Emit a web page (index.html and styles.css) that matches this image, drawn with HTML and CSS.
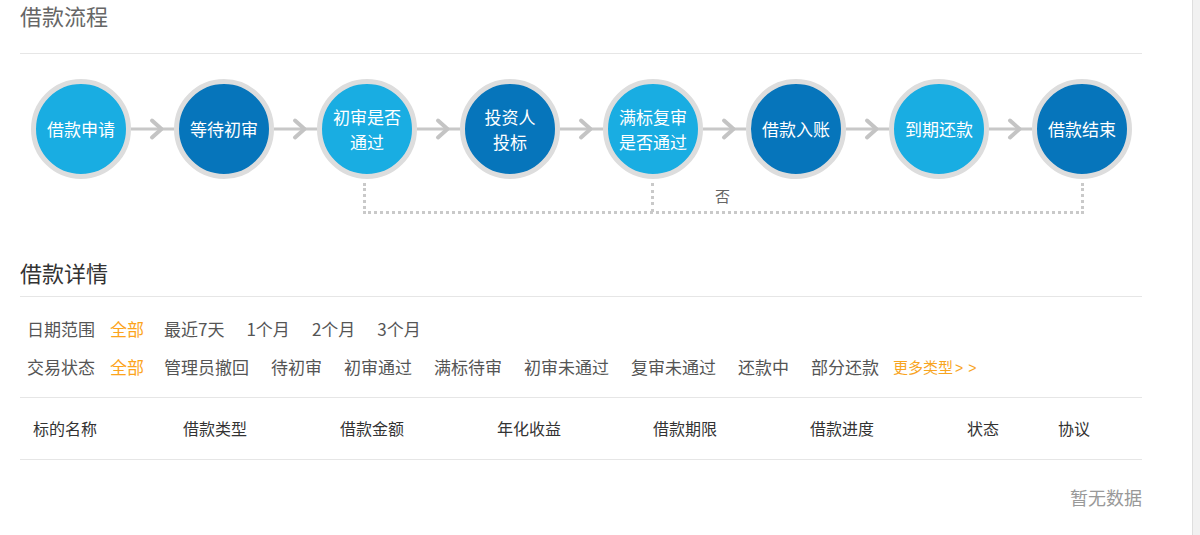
FILE: index.html
```html
<!DOCTYPE html>
<html lang="zh-CN">
<head>
<meta charset="utf-8">
<title>借款流程</title>
<link rel="stylesheet" href="styles.css">
</head>
<body>
<div class="page">
  <main class="main">
    <h2 class="title title-flow">借款流程</h2>

    <div class="flow">
      <div class="steps">
        <div class="step light"><span>借款申请</span></div>
        <div class="conn"><svg viewBox="0 0 43 24" width="43" height="24"><line x1="0" y1="12" x2="43" y2="12"/><path d="M21 3.5 L30.5 12 L21 20.5"/></svg></div>
        <div class="step dark"><span>等待初审</span></div>
        <div class="conn"><svg viewBox="0 0 43 24" width="43" height="24"><line x1="0" y1="12" x2="43" y2="12"/><path d="M21 3.5 L30.5 12 L21 20.5"/></svg></div>
        <div class="step light"><span>初审是否<br>通过</span></div>
        <div class="conn"><svg viewBox="0 0 43 24" width="43" height="24"><line x1="0" y1="12" x2="43" y2="12"/><path d="M21 3.5 L30.5 12 L21 20.5"/></svg></div>
        <div class="step dark"><span>投资人<br>投标</span></div>
        <div class="conn"><svg viewBox="0 0 43 24" width="43" height="24"><line x1="0" y1="12" x2="43" y2="12"/><path d="M21 3.5 L30.5 12 L21 20.5"/></svg></div>
        <div class="step light"><span>满标复审<br>是否通过</span></div>
        <div class="conn"><svg viewBox="0 0 43 24" width="43" height="24"><line x1="0" y1="12" x2="43" y2="12"/><path d="M21 3.5 L30.5 12 L21 20.5"/></svg></div>
        <div class="step dark"><span>借款入账</span></div>
        <div class="conn"><svg viewBox="0 0 43 24" width="43" height="24"><line x1="0" y1="12" x2="43" y2="12"/><path d="M21 3.5 L30.5 12 L21 20.5"/></svg></div>
        <div class="step light"><span>到期还款</span></div>
        <div class="conn"><svg viewBox="0 0 43 24" width="43" height="24"><line x1="0" y1="12" x2="43" y2="12"/><path d="M21 3.5 L30.5 12 L21 20.5"/></svg></div>
        <div class="step dark"><span>借款结束</span></div>
      </div>
      <div class="loop"></div>
      <div class="loop-mid"></div>
      <span class="no-label">否</span>
    </div>

    <h2 class="title title-detail">借款详情</h2>

    <div class="filters">
      <div class="filter-row">
        <span class="f-label">日期范围</span>
        <a class="f-item active">全部</a>
        <a class="f-item">最近7天</a>
        <a class="f-item">1个月</a>
        <a class="f-item">2个月</a>
        <a class="f-item">3个月</a>
      </div>
      <div class="filter-row">
        <span class="f-label">交易状态</span>
        <a class="f-item active">全部</a>
        <a class="f-item">管理员撤回</a>
        <a class="f-item">待初审</a>
        <a class="f-item">初审通过</a>
        <a class="f-item">满标待审</a>
        <a class="f-item">初审未通过</a>
        <a class="f-item">复审未通过</a>
        <a class="f-item">还款中</a>
        <a class="f-item last">部分还款</a>
        <a class="f-more">更多类型<span class="gt">&gt;&gt;</span></a>
      </div>
    </div>

    <div class="thead">
      <span>标的名称</span>
      <span>借款类型</span>
      <span>借款金额</span>
      <span>年化收益</span>
      <span>借款期限</span>
      <span>借款进度</span>
      <span>状态</span>
      <span>协议</span>
    </div>

    <div class="empty">暂无数据</div>
  </main>
  <aside class="rail"></aside>
</div>
</body>
</html>
```
FILE: styles.css
```css
* { box-sizing: border-box; }
html, body { margin: 0; padding: 0; background: #fff; }
body {
  font-family: "Noto Sans CJK SC", "Noto Sans", "Liberation Sans", sans-serif;
  color: #555;
  width: 1200px;
  height: 535px;
  overflow: hidden;
}
.page { display: flex; height: 535px; }
.main { width: 1192px; padding-left: 20px; padding-right: 50px; }
.rail { width: 8px; background: #f1f1f1; border-left: 1px solid #dedede; }

.title {
  margin: 0;
  font-size: 22px;
  font-weight: normal;
  line-height: 30px;
  border-bottom: 1px solid #e6e6e6;
}
.title-flow { color: #666; padding-bottom: 23px; }
.title-detail { color: #333; padding-bottom: 9px; }

.flow { position: relative; height: 203px; padding-top: 25px; }
.steps { display: flex; align-items: center; margin-left: 11px; width: 1098px; }
.step {
  width: 100px; height: 100px; flex: none;
  border-radius: 50%;
  border: 5px solid #dddddd;
  display: flex; align-items: center; justify-content: center;
  color: #fff;
  font-size: 17px;
  line-height: 25px;
  text-align: center;
}
.step.light { background: #19ade2; }
.step.dark { background: #0675bb; }
.step span { margin-top: -1px; }
.conn { flex: 1; display: flex; align-items: center; justify-content: center; height: 24px; overflow: visible; }
.conn svg { display: block; overflow: visible; }
.conn line { stroke: #c8c8c8; stroke-width: 3; }
.conn path { fill: none; stroke: #c4c4c4; stroke-width: 4; stroke-linecap: round; stroke-linejoin: round; }

.loop {
  position: absolute;
  left: 343px; top: 129px;
  width: 721px; height: 31px;
  border: 3px dotted #c9c9c9;
  border-top: none;
}
.loop-mid {
  position: absolute;
  left: 631px; top: 129px;
  height: 29px;
  border-left: 3px dotted #c9c9c9;
}
.no-label {
  position: absolute;
  left: 695px; top: 132px;
  font-size: 15px;
  line-height: 20px;
  color: #666;
}

.filters { padding: 12px 0 12px 7px; border-bottom: 1px solid #e6e6e6; }
.filter-row { display: flex; align-items: center; height: 38px; font-size: 17px; white-space: nowrap; }
.f-label { color: #555; margin-right: 15px; }
.f-item { color: #555; margin-right: 22px; cursor: pointer; }
.f-item.active { color: #fca41c; margin-right: 20px; }
.f-item.last { margin-right: 14px; }
.f-more { color: #f8a51f; font-size: 15px; }
.f-more .gt { letter-spacing: 5px; margin-left: 2px; font-family: "Liberation Sans", sans-serif; font-size: 14px; }

.thead {
  display: grid;
  grid-template-columns: 150px 157px 157px 156px 157px 157px 91px 1fr;
  padding-left: 13px;
  height: 62px;
  line-height: 61px;
  font-size: 16px;
  color: #333;
  border-bottom: 1px solid #e6e6e6;
}

.empty {
  text-align: right;
  margin-top: 22px;
  font-size: 18px;
  line-height: 30px;
  color: #999;
}
```
